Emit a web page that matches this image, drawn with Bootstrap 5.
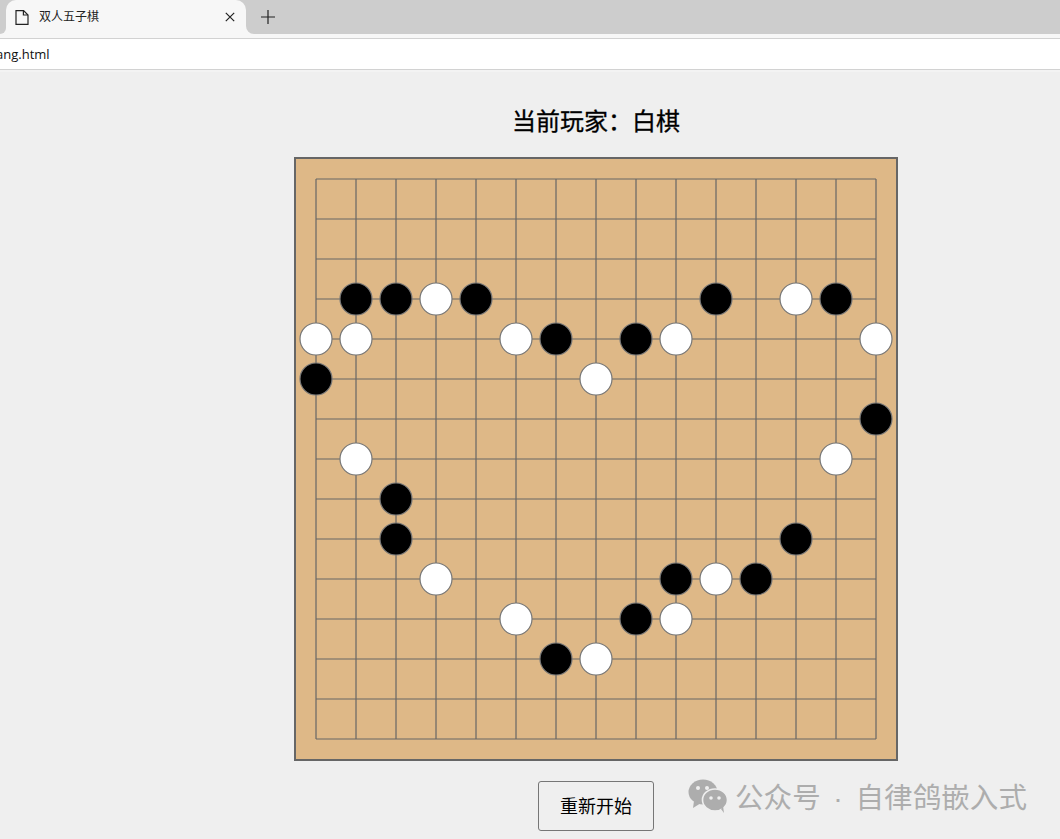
<!DOCTYPE html>
<html lang="zh">
<head>
<meta charset="utf-8">
<title>双人五子棋</title>
<link href="https://cdn.jsdelivr.net/npm/bootstrap@5.3.0/dist/css/bootstrap.min.css" rel="stylesheet">
<style>
html,body{height:100%;}
body{background:#efefef;color:#000;font-family:"Liberation Sans","Noto Sans CJK SC",sans-serif;overflow:hidden;width:1060px;height:839px;}
.tabstrip{height:39px;background:#f7f7f7;border-bottom:1px solid #d2d2d2;}
.strip-left{width:6px;height:34px;background:#cdcdcd;border-bottom-right-radius:8px;}
.strip-right{height:34px;background:#cdcdcd;border-bottom-left-radius:8px;padding-left:15px;}
.tab-backing{width:240px;height:34px;background:#cdcdcd;}
.chrome-tab{height:34px;background:#f7f7f7;border-radius:10px 10px 0 0;padding:0 11px 0 9px;font-size:12px;color:#222;}
.tab-title{margin-left:10px;line-height:34px;}
.addrbar{height:31px;background:#fff;border-bottom:1px solid #d2d2d2;font-family:"Open Sans","Liberation Sans",sans-serif;font-size:13px;line-height:31px;white-space:nowrap;overflow:hidden;}
.addr-text{margin-left:-4px;color:#111;display:inline-block;}
.gap-strip{height:2px;background:#f3f3f3;}
.game-col{width:1060px;padding-top:32px;padding-left:132px;}
.status-text{width:600px;font-size:24px;line-height:36px;font-weight:400;-webkit-text-stroke:.3px #000;margin:0 0 17px 0;}
.board-wrap{width:604px;height:604px;border:2px solid #666;background:#deb887;}
.board-wrap svg{display:block;}
.game-grid line{stroke:#666;stroke-width:1.2;}
.stone-b{fill:#000;stroke:#777;stroke-width:1.2;}
.stone-w{fill:#fff;stroke:#777;stroke-width:1.2;}
.reset-btn{width:116px;height:50px;font-size:18px;background:#efefef;border:1px solid #767676;border-radius:3px;color:#000;padding:2px 0 0;margin-top:20px;}
.page-main{position:relative;}
.wm-mark{position:absolute;left:688px;top:706px;color:#adadad;font-size:28.5px;line-height:40px;word-spacing:4.5px;letter-spacing:.1px;white-space:nowrap;}
.wm-icon{margin-top:-4px;margin-right:7px;}
</style>
</head>
<body>
<div class="tabstrip d-flex align-items-start">
  <div class="strip-left"></div>
  <div class="tab-backing">
    <div class="chrome-tab d-flex align-items-center">
      <svg width="14" height="17" viewBox="0 0 14 17" fill="none" stroke="#222" stroke-width="1.2"><path d="M1 1.6h7.6L13 6v9.4H1z"/><path d="M8.4 1.6V6H13"/></svg>
      <span class="tab-title flex-grow-1">双人五子棋</span>
      <svg width="10" height="10" viewBox="0 0 10 10" stroke="#222" stroke-width="1.2"><path d="M.8.8l8.4 8.4M9.2.8L.8 9.2"/></svg>
    </div>
  </div>
  <div class="strip-right flex-grow-1 d-flex align-items-center">
    <svg width="14" height="14" viewBox="0 0 14 14" stroke="#222" stroke-width="1.2"><path d="M7 0v14M0 7h14"/></svg>
  </div>
</div>
<div class="addrbar"><span class="addr-text">ang.html</span></div>
<div class="gap-strip"></div>
<main class="page-main">
  <div class="game-col d-flex flex-column align-items-center">
    <h1 class="status-text text-center">当前玩家：白棋</h1>
    <div class="board-wrap">
      <svg id="board" width="600" height="600" viewBox="0 0 600 600" xmlns="http://www.w3.org/2000/svg">
        <g class="game-grid" id="grid"></g>
        <g id="stones"></g>
      </svg>
    </div>
    <button class="reset-btn" type="button">重新开始</button>
  </div>
  <div class="wm-mark d-flex align-items-center">
    <svg width="40" height="36" viewBox="0 0 40 36" fill="#adadad" class="wm-icon"><ellipse cx="15" cy="14" rx="14.5" ry="12.5"/><path d="M6 23l-1 7 8-5z"/><ellipse cx="27" cy="22" rx="12.5" ry="11" stroke="#efefef" stroke-width="1.6"/><path d="M33 31l3 4-1-7z"/><circle cx="10" cy="10" r="2" fill="#efefef"/><circle cx="19" cy="10" r="2" fill="#efefef"/><circle cx="23" cy="20" r="1.8" fill="#efefef"/><circle cx="31" cy="20" r="1.8" fill="#efefef"/></svg>
    <span>公众号 · 自律鸽嵌入式</span>
  </div>
</main>
<script>
const NS='http://www.w3.org/2000/svg';
const grid=document.getElementById('grid');
for(let i=0;i<15;i++){
  const p=20+i*40;
  [[20,p,580,p],[p,20,p,580]].forEach(c=>{
    const l=document.createElementNS(NS,'line');
    ['x1','y1','x2','y2'].forEach((k,j)=>l.setAttribute(k,c[j]));
    grid.appendChild(l);
  });
}
const layout=[
 [3,1,'b'],[3,2,'b'],[3,3,'w'],[3,4,'b'],[3,10,'b'],[3,12,'w'],[3,13,'b'],
 [4,0,'w'],[4,1,'w'],[4,5,'w'],[4,6,'b'],[4,8,'b'],[4,9,'w'],[4,14,'w'],
 [5,0,'b'],[5,7,'w'],[6,14,'b'],[7,1,'w'],[7,13,'w'],[8,2,'b'],[9,2,'b'],[9,12,'b'],
 [10,3,'w'],[10,9,'b'],[10,10,'w'],[10,11,'b'],[11,5,'w'],[11,8,'b'],[11,9,'w'],[12,6,'b'],[12,7,'w']];
const st=document.getElementById('stones');
layout.forEach(([r,c,k])=>{
  const o=document.createElementNS(NS,'circle');
  o.setAttribute('cx',20+c*40);o.setAttribute('cy',20+r*40);o.setAttribute('r',16);
  o.setAttribute('class',k==='b'?'stone-b':'stone-w');
  st.appendChild(o);
});
</script>
<script src="https://cdn.jsdelivr.net/npm/bootstrap@5.3.0/dist/js/bootstrap.bundle.min.js"></script>
</body>
</html>
